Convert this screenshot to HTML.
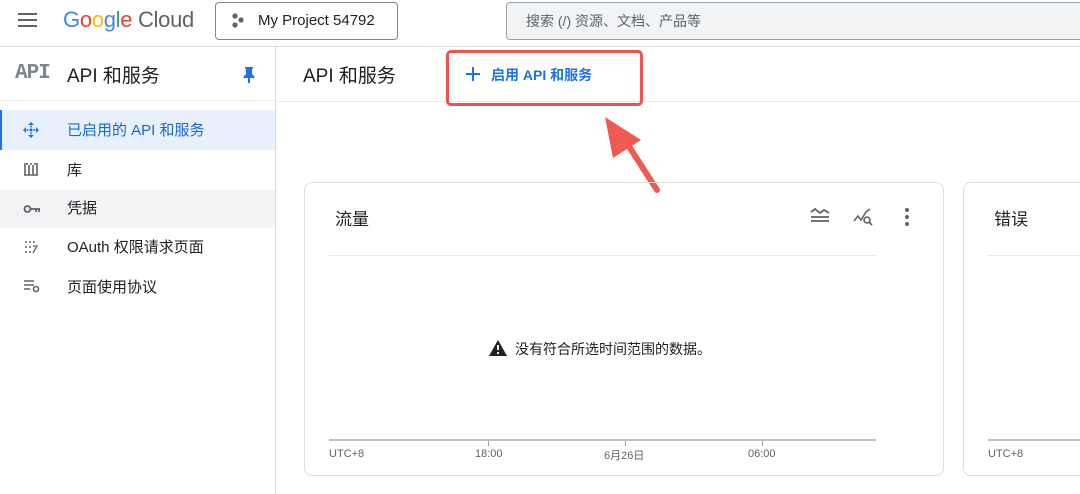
<!DOCTYPE html>
<html><head><meta charset="utf-8"><style>
*{box-sizing:border-box;margin:0;padding:0}
body{width:1080px;height:494px;overflow:hidden;background:#fff;font-family:"Liberation Sans","Noto Sans CJK SC",sans-serif;color:#202124;position:relative}
.a{position:absolute}
.t{white-space:nowrap}
</style></head><body>
<div class="a" style="left:0;top:46px;width:1080px;height:1px;background:#dadce0"></div>
<div class="a" style="left:18px;top:13px;width:19px;height:2px;background:#5f6368;box-shadow:0 6px 0 #5f6368,0 12px 0 #5f6368"></div>
<div class="a t" style="left:63px;top:7px;font-size:22px;letter-spacing:-0.3px"><span style="color:#4285f4">G</span><span style="color:#ea4335">o</span><span style="color:#fbbc05">o</span><span style="color:#4285f4">g</span><span style="color:#34a853">l</span><span style="color:#ea4335">e</span><span style="color:#5f6368"> Cloud</span></div>
<div class="a" style="left:215px;top:2px;width:183px;height:38px;border:1px solid #80868b;border-radius:4px"></div>
<svg class="a" style="left:230px;top:12px" width="16" height="16"><circle cx="5" cy="4" r="2.6" fill="#5f6368"/><circle cx="11" cy="8" r="2.6" fill="#5f6368"/><circle cx="5" cy="13" r="2.6" fill="#5f6368"/></svg>
<div class="a t" style="left:258px;top:12px;font-size:15px">My Project 54792</div>
<div class="a" style="left:506px;top:2px;width:590px;height:38px;border:1px solid #9aa0a6;border-radius:4px;background:#f1f3f4"></div>
<div class="a t" style="left:526px;top:11px;font-size:14px;color:#5f6368">搜索 (/) 资源、文档、产品等</div>
<div class="a" style="left:275px;top:47px;width:1px;height:447px;background:#dadce0"></div>
<div class="a t" style="left:15px;top:62px;font-size:21px;font-family:'Liberation Mono',monospace;font-weight:bold;color:#80868b;letter-spacing:-1px">API</div>
<div class="a t" style="left:67px;top:61px;font-size:19px">API 和服务</div>
<svg class="a" style="left:242px;top:66px" width="14" height="17"><path d="M3 1h8v1.5l-1 .5v5l2.5 2.5V12H8v5H6v-5H1.5v-1.5L4 8V3L3 2.5z" fill="#1a73e8"/></svg>
<div class="a" style="left:0;top:100px;width:275px;height:1px;background:#e8eaed"></div>
<div class="a" style="left:0;top:110px;width:275px;height:40px;background:#e8f0fe;border-left:2px solid #1a73e8"></div>
<svg class="a" style="left:22px;top:121px" width="18" height="18"><path d="M9 1l3 3H6zM9 17l-3-3h6zM1 9l3-3v6zM17 9l-3 3V6z" fill="#1a73e8"/><circle cx="9" cy="9" r="1.6" fill="#1a73e8"/><circle cx="9" cy="5.5" r="1" fill="#1a73e8"/><circle cx="9" cy="12.5" r="1" fill="#1a73e8"/><circle cx="5.5" cy="9" r="1" fill="#1a73e8"/><circle cx="12.5" cy="9" r="1" fill="#1a73e8"/></svg>
<div class="a t" style="left:67px;top:119px;font-size:15px;color:#1967d2">已启用的 API 和服务</div>
<svg class="a" style="left:24px;top:162px" width="14" height="14"><path d="M1 1v12M5 3v10M9 3v10M13 1v12M0 13h14M3 1v2M7 1v2M11 1v2" stroke="#5f6368" stroke-width="1.6" fill="none"/></svg>
<div class="a t" style="left:67px;top:159px;font-size:15px">库</div>
<div class="a" style="left:0;top:190px;width:275px;height:38px;background:#f1f3f4"></div>
<svg class="a" style="left:23px;top:203px" width="18" height="12"><circle cx="4.5" cy="6" r="3" stroke="#5f6368" stroke-width="1.8" fill="none"/><path d="M7.5 6H17M13 6v3M16 6v3" stroke="#5f6368" stroke-width="1.8"/></svg>
<div class="a t" style="left:67px;top:197px;font-size:15px">凭据</div>
<svg class="a" style="left:24px;top:240px" width="14" height="14" fill="#5f6368"><circle cx="2" cy="2" r="1"/><circle cx="6" cy="2" r="1"/><circle cx="10" cy="2" r="1"/><circle cx="2" cy="7" r="1"/><circle cx="6" cy="7" r="1"/><circle cx="2" cy="12" r="1"/><circle cx="6" cy="12" r="1"/><path d="M9 6h4l-4 7" stroke="#5f6368" stroke-width="1.3" fill="none"/></svg>
<div class="a t" style="left:67px;top:236px;font-size:15px">OAuth 权限请求页面</div>
<svg class="a" style="left:23px;top:279px" width="18" height="14"><path d="M1 2h10M1 6h10M1 10h6" stroke="#5f6368" stroke-width="1.5"/><circle cx="13" cy="10" r="2.5" stroke="#5f6368" stroke-width="1.6" fill="none"/></svg>
<div class="a t" style="left:67px;top:276px;font-size:15px">页面使用协议</div>
<div class="a t" style="left:303px;top:61px;font-size:19px">API 和服务</div>
<div class="a" style="left:276px;top:101px;width:804px;height:1px;background:#e8eaed"></div>
<div class="a" style="left:446px;top:50px;width:197px;height:56px;border:3px solid #ef5350;border-radius:5px"></div>
<svg class="a" style="left:465px;top:66px" width="16" height="16"><path d="M8 1v14M1 8h14" stroke="#1a73e8" stroke-width="2"/></svg>
<div class="a t" style="left:491px;top:65px;font-size:14px;color:#1a73e8;font-weight:bold">启用 API 和服务</div>
<svg class="a" style="left:595px;top:112px" width="80" height="86"><path d="M62 78L26 22" stroke="#ef5a52" stroke-width="6" stroke-linecap="round"/><path d="M10 5L18 46L46 28z" fill="#ef5a52"/></svg>
<div class="a" style="left:304px;top:182px;width:640px;height:294px;border:1px solid #dadce0;border-radius:8px"></div>
<div class="a t" style="left:335px;top:205px;font-size:17px">流量</div>
<svg class="a" style="left:809px;top:207px" width="22" height="20"><path d="M2 5l4-3 5 4 4-3 5 3M2 10h18M2 14h18" stroke="#5f6368" stroke-width="1.8" fill="none"/></svg>
<svg class="a" style="left:853px;top:207px" width="22" height="20"><path d="M1 14l4-5 3 4 5-8 4-3" stroke="#5f6368" stroke-width="1.6" fill="none"/><circle cx="14" cy="13" r="3" stroke="#5f6368" stroke-width="1.6" fill="#fff"/><path d="M16 15l3 3" stroke="#5f6368" stroke-width="1.8"/></svg>
<svg class="a" style="left:901px;top:207px" width="12" height="20" fill="#5f6368"><circle cx="6" cy="3" r="2"/><circle cx="6" cy="10" r="2"/><circle cx="6" cy="17" r="2"/></svg>
<div class="a" style="left:329px;top:255px;width:547px;height:1px;background:#e8eaed"></div>
<svg class="a" style="left:489px;top:340px" width="18" height="16"><path d="M9 0L18 16H0z" fill="#202124"/><path d="M9 5v5" stroke="#fff" stroke-width="2"/><circle cx="9" cy="13" r="1.1" fill="#fff"/></svg>
<div class="a t" style="left:515px;top:339px;font-size:14px">没有符合所选时间范围的数据。</div>
<div class="a" style="left:329px;top:439px;width:547px;height:2px;background:#bdc1c6"></div>
<div class="a" style="left:488px;top:441px;width:1px;height:5px;background:#9aa0a6"></div>
<div class="a" style="left:625px;top:441px;width:1px;height:5px;background:#9aa0a6"></div>
<div class="a" style="left:762px;top:441px;width:1px;height:5px;background:#9aa0a6"></div>
<div class="a t" style="left:329px;top:448px;font-size:11px;color:#5f6368">UTC+8</div>
<div class="a t" style="left:475px;top:448px;font-size:11px;color:#5f6368">18:00</div>
<div class="a t" style="left:604px;top:447px;font-size:11px;color:#5f6368">6月26日</div>
<div class="a t" style="left:748px;top:448px;font-size:11px;color:#5f6368">06:00</div>
<div class="a" style="left:963px;top:182px;width:200px;height:294px;border:1px solid #dadce0;border-radius:8px"></div>
<div class="a t" style="left:994px;top:205px;font-size:17px">错误</div>
<div class="a" style="left:988px;top:255px;width:100px;height:1px;background:#e8eaed"></div>
<div class="a" style="left:988px;top:439px;width:100px;height:2px;background:#bdc1c6"></div>
<div class="a t" style="left:988px;top:448px;font-size:11px;color:#5f6368">UTC+8</div>
</body></html>
